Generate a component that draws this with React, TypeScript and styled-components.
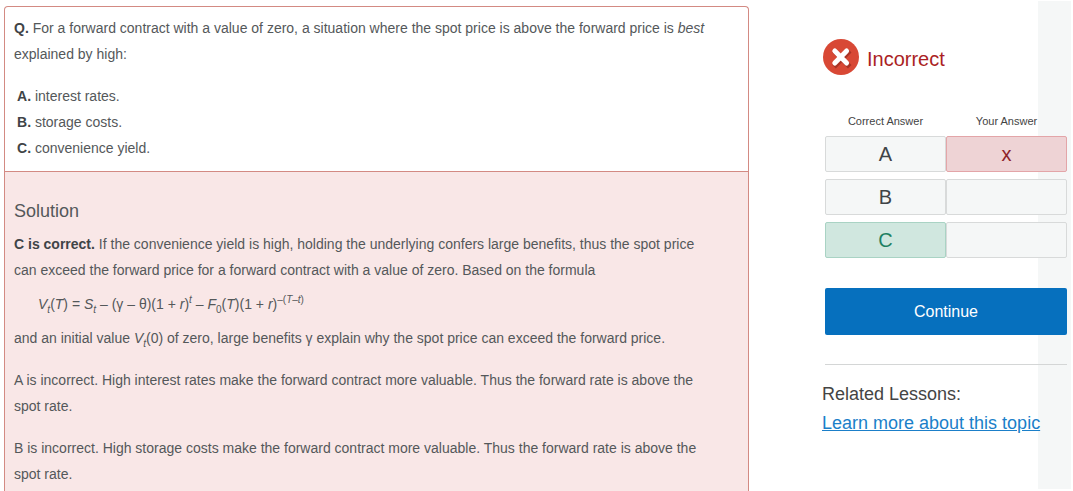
import React from "react";
import styled, { createGlobalStyle } from "styled-components";

const GlobalStyle = createGlobalStyle`
  *, *::before, *::after { box-sizing: border-box; }
  body {
    margin: 0;
    background: #fff;
    color: #54585a;
    font-family: "Liberation Sans", Arial, sans-serif;
  }
`;

const Page = styled.div`
  display: flex;
  gap: 76px;
  min-height: 100vh;
  padding: 6px 6px 0 4px;
  background: linear-gradient(#f5f7f7, #f5f7f7) right 2px top 1px / 33px calc(100% - 3px) no-repeat;
`;

const QuestionPanel = styled.main`
  flex: 1;
  min-width: 0;
  display: flex;
  flex-direction: column;
  border: 1px solid #d38a83;
  border-bottom: 0;
  border-radius: 4px 4px 0 0;
  font-size: 14px;
  line-height: 26px;
`;

const Question = styled.section`
  padding: 8px 32px 10px 9px;
`;

const Solution = styled.section`
  flex: 1;
  padding: 26px 32px 4px 9px;
  border-top: 1px solid #d38a83;
  background: #f9e7e7;
`;

const Paragraph = styled.p`
  margin: 0 0 16px;
`;

const Strong = styled.strong`
  color: #3f4447;
`;

const OptionList = styled.ul`
  margin: 0;
  padding: 0 0 0 3px;
  list-style: none;
`;

const SolutionTitle = styled.h2`
  margin: 0 0 7px;
  font-size: 18px;
  font-weight: 400;
  line-height: 26px;
`;

const Lead = styled.p`
  margin: 0;
`;

const Formula = styled.p`
  margin: 8px 0;
  padding-left: 24px;
`;

const Sub = styled.sub`
  font-size: 10px;
  line-height: 0;
`;

const Sup = styled.sup`
  font-size: 10px;
  line-height: 0;
`;

const Sidebar = styled.aside`
  width: 242px;
  flex: none;
  padding-top: 33px;
`;

const Verdict = styled.div`
  display: flex;
  align-items: center;
  gap: 8px;
  margin-left: -2px;
`;

const VerdictText = styled.h1`
  margin: 4px 0 0;
  color: #ab1f24;
  font-size: 20px;
  font-weight: 400;
  line-height: 24px;
`;

const AnswerTable = styled.table`
  width: 100%;
  margin-top: 31px;
  border-collapse: separate;
  border-spacing: 0 7px;
  table-layout: fixed;
`;

const HeaderCell = styled.th`
  padding: 0;
  color: #444;
  font-size: 11px;
  font-weight: 400;
  line-height: 16px;
`;

type Tone = "plain" | "wrong" | "right";

const tones = {
  plain: { border: "#d8dada", fill: "#f5f7f7", text: "#3f4447" },
  wrong: { border: "#e3a5a8", fill: "#eed3d5", text: "#8e2329" },
  right: { border: "#a9d3c4", fill: "#d0e7df", text: "#1f8163" },
};

const AnswerCell = styled.td<{ $tone: Tone }>`
  height: 36px;
  padding: 0;
  border: 1px solid ${(p) => tones[p.$tone].border};
  border-radius: 2px;
  background: ${(p) => tones[p.$tone].fill};
  color: ${(p) => tones[p.$tone].text};
  font-size: 20px;
  line-height: 24px;
  text-align: center;
`;

const ContinueButton = styled.button`
  display: block;
  width: 100%;
  height: 47px;
  margin-top: 23px;
  padding: 0;
  border: 0;
  border-radius: 2px;
  background: #0670be;
  color: #fff;
  font: 400 16px/24px "Liberation Sans", Arial, sans-serif;
  cursor: pointer;
`;

const Divider = styled.hr`
  margin: 29px 0 15px;
  border: 0;
  border-top: 1px solid #d4d6d6;
`;

const Related = styled.nav`
  margin-left: -3px;
  color: #444;
  font-size: 18px;
  line-height: 29px;
`;

const RelatedTitle = styled.div``;

const LessonLink = styled.a`
  color: #1b7fc9;
  text-decoration: underline;
  white-space: nowrap;
`;

const options = [
  { letter: "A", text: "interest rates." },
  { letter: "B", text: "storage costs." },
  { letter: "C", text: "convenience yield." },
];

const answers: { letter: string; tone: Tone; mark: string; markTone: Tone }[] = [
  { letter: "A", tone: "plain", mark: "x", markTone: "wrong" },
  { letter: "B", tone: "plain", mark: "", markTone: "plain" },
  { letter: "C", tone: "right", mark: "", markTone: "plain" },
];

function IncorrectIcon() {
  return (
    <svg width="36" height="36" viewBox="0 0 36 36" aria-hidden="true">
      <circle cx="18" cy="18" r="18" fill="#d84835" />
      <path d="M12.8 13.5l12.2 12.4M25 13.5L12.8 25.9" stroke="#a93325" strokeWidth="5" strokeLinecap="square" />
      <path d="M11.8 12l11.8 12M23.6 12L11.8 24" stroke="#fff" strokeWidth="5" strokeLinecap="round" />
    </svg>
  );
}

export default function App() {
  return (
    <>
      <GlobalStyle />
      <Page>
        <QuestionPanel>
          <Question>
            <Paragraph>
              <Strong>Q.</Strong> For a forward contract with a value of zero, a situation where the spot
              price is above the forward price is <em>best</em> explained by high:
            </Paragraph>
            <OptionList>
              {options.map((o) => (
                <li key={o.letter}>
                  <Strong>{o.letter}.</Strong> {o.text}
                </li>
              ))}
            </OptionList>
          </Question>
          <Solution>
            <SolutionTitle>Solution</SolutionTitle>
            <Lead>
              <Strong>C is correct.</Strong> If the convenience yield is high, holding the underlying confers
              large benefits, thus the spot price can exceed the forward price for a forward contract with a
              value of zero. Based on the formula
            </Lead>
            <Formula>
              <em>V</em><Sub><em>t</em></Sub>(<em>T</em>) = <em>S</em><Sub><em>t</em></Sub> – (γ – θ)(1 + <em>r</em>)<Sup><em>t</em></Sup> – <em>F</em><Sub>0</Sub>(<em>T</em>)(1 + <em>r</em>)<Sup>–(<em>T</em>–<em>t</em>)</Sup>
            </Formula>
            <Paragraph>
              and an initial value <em>V</em><Sub><em>t</em></Sub>(0) of zero, large benefits γ explain why the
              spot price can exceed the forward price.
            </Paragraph>
            <Paragraph>
              A is incorrect. High interest rates make the forward contract more valuable. Thus the forward rate
              is above the spot rate.
            </Paragraph>
            <Lead>
              B is incorrect. High storage costs make the forward contract more valuable. Thus the forward rate
              is above the spot rate.
            </Lead>
          </Solution>
        </QuestionPanel>
        <Sidebar>
          <Verdict>
            <IncorrectIcon />
            <VerdictText>Incorrect</VerdictText>
          </Verdict>
          <AnswerTable>
            <thead>
              <tr>
                <HeaderCell scope="col">Correct Answer</HeaderCell>
                <HeaderCell scope="col">Your Answer</HeaderCell>
              </tr>
            </thead>
            <tbody>
              {answers.map((a) => (
                <tr key={a.letter}>
                  <AnswerCell $tone={a.tone}>{a.letter}</AnswerCell>
                  <AnswerCell $tone={a.markTone}>{a.mark}</AnswerCell>
                </tr>
              ))}
            </tbody>
          </AnswerTable>
          <ContinueButton type="button">Continue</ContinueButton>
          <Divider />
          <Related>
            <RelatedTitle>Related Lessons:</RelatedTitle>
            <LessonLink href="#related-lesson">Learn more about this topic</LessonLink>
          </Related>
        </Sidebar>
      </Page>
    </>
  );
}
